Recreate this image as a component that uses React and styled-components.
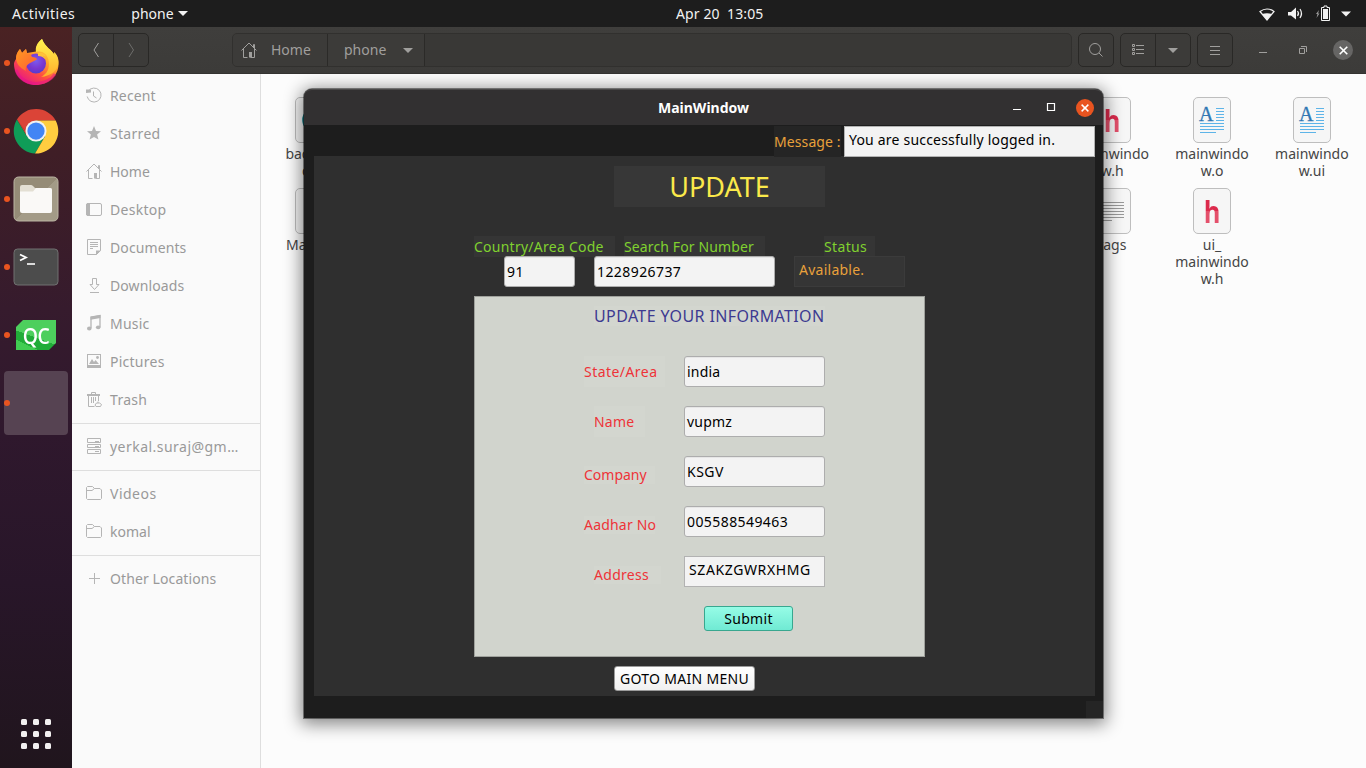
import React from "react";
import styled, { createGlobalStyle } from "styled-components";

const GlobalStyle = createGlobalStyle`
  * { box-sizing: border-box; }
  html, body { margin: 0; padding: 0; }
  body {
    width: 1366px; height: 768px; overflow: hidden; background: #fcfcfc;
    font-family: "Noto Sans", "Open Sans", sans-serif; font-size: 14px;
  }
  svg { display: block; flex: none; overflow: visible; }
  button { font: inherit; margin: 0; outline: none; }
`;

const Desktop = styled.div`
  position: relative;
  width: 1366px;
  height: 768px;
  overflow: hidden;
  display: flex;
  flex-direction: column;
`;

/* Each text run carries its own tracking. */
const Text = styled.span`
  white-space: pre;
  letter-spacing: ${(p) => p.$ls || 0}px;
`;

/* ---------- top bar ---------- */
const TopBar = styled.header`
  height: 27px;
  flex: none;
  display: grid;
  grid-template-columns: 1fr auto 1fr;
  align-items: center;
  background: #1d1d1d;
  color: #f2f2f2;
  line-height: 27px;
`;
const TopLeft = styled.div`
  display: flex;
  align-items: center;
  padding-left: 12px;
`;
const AppMenu = styled.div`
  display: flex;
  align-items: center;
  gap: 4px;
  margin-left: 56px;
`;
const Clock = styled.div`
  width: 88px;
  margin-left: 74px;
`;
const TopRight = styled.div`
  display: flex;
  justify-content: flex-end;
  align-items: center;
  padding-right: 15px;
`;

/* ---------- dock ---------- */
const Main = styled.div`
  flex: 1;
  display: flex;
  min-height: 0;
`;
const Dock = styled.nav`
  width: 72px;
  flex: none;
  display: flex;
  flex-direction: column;
  padding: 4px 4px 0;
  background: linear-gradient(180deg, #4a2223 0%, #3f1e26 17%, #361b2d 38%, #2f182d 55%, #281629 75%, #20151d 100%);
`;
const DockItem = styled.div`
  width: 64px;
  height: 64px;
  margin-bottom: 4px;
  display: flex;
  align-items: center;
  gap: 3px;
  border-radius: 4px;
  background: ${(p) => (p.$active ? "#564352" : "transparent")};
`;
const Dot = styled.i`
  width: 6px;
  height: 6px;
  border-radius: 50%;
  background: #e95420;
`;
const AppGrid = styled.div`
  margin: auto 0 19px 17px;
  display: grid;
  grid-template-columns: repeat(3, 6px);
  gap: 6px;
`;
const AppGridDot = styled.i`
  height: 6px;
  border-radius: 1.5px;
  background: #f2f0f0;
`;

/* ---------- file manager ---------- */
const Files = styled.div`
  flex: 1;
  display: flex;
  flex-direction: column;
  min-width: 0;
`;
const HeaderBar = styled.div`
  height: 47px;
  flex: none;
  display: flex;
  align-items: center;
  padding: 0 13px 0 6px;
  background: linear-gradient(#3f3e3c, #3c3b39);
  border-bottom: 1px solid #343331;
  color: #a09f9d;
  ${Text} { margin-top: -2px; }
`;
const ButtonGroup = styled.div`
  display: flex;
  height: 34px;
  margin-left: ${(p) => p.$ml || 0}px;
  border: 1px solid #292826;
  border-radius: 5px;
  background: #3c3b39;
`;
const HeaderButton = styled.div`
  width: ${(p) => p.$w || 34}px;
  display: flex;
  align-items: center;
  justify-content: center;
  & + & { border-left: 1px solid #292826; }
`;
const PathBar = styled.div`
  display: flex;
  width: 840px;
  height: 34px;
  margin: 0 6px 0 83px;
  border: 1px solid #31302e;
  border-radius: 5px;
  background: #393836;
  overflow: hidden;
`;
const PathItem = styled.div`
  width: ${(p) => p.$w}px;
  display: flex;
  align-items: center;
  gap: ${(p) => p.$gap}px;
  padding-left: ${(p) => p.$pl}px;
  border-right: 1px solid #2b2a28;
  background: #3c3b39;
`;
const WindowControls = styled.div`
  flex: 1;
  display: flex;
  align-items: center;
  justify-content: flex-end;
`;
const FileBody = styled.div`
  flex: 1;
  display: flex;
  min-height: 0;
`;
const Sidebar = styled.aside`
  width: 189px;
  flex: none;
  padding-top: 2px;
  background: #fafafa;
  border-right: 1px solid #dedede;
`;
const SideItem = styled.div`
  display: flex;
  align-items: center;
  height: 38px;
  gap: 8px;
  padding-left: 14px;
  color: #b5b5b5;
  ${Text} { color: #999; }
`;
const SideRule = styled.hr`
  height: 1px;
  margin: 5px 0 3px;
  border: 0;
  background: #dedede;
`;
const FileGrid = styled.div`
  display: grid;
  flex: 1;
  grid-template-columns: repeat(11, 99.8px);
  grid-auto-rows: 91px;
  padding: 23px 0 0 3px;
  overflow: hidden;
`;
const FileCell = styled.div`
  grid-column: ${(p) => p.$col};
  grid-row: ${(p) => p.$row};
  display: flex;
  flex-direction: column;
  align-items: center;
  color: #454545;
  line-height: 17px;
`;
const FileIcon = styled.div`
  width: 38px;
  height: 46px;
  flex: none;
  margin-bottom: 2px;
  display: flex;
  align-items: center;
  justify-content: center;
  border: 1px solid #bebebe;
  border-bottom-width: 1.5px;
  border-radius: 5px;
  background: #f6f6f6;
`;
const Glyph = styled.span`
  font: bold 31px/38px "Open Sans", sans-serif;
  transform: scaleX(0.82);
  background: linear-gradient(#dc2a4c 50%, #e4506b 50%);
  background-clip: text;
  color: transparent;
`;

/* ---------- application window ---------- */
const Win = styled.section`
  position: absolute;
  left: 304px;
  top: 89px;
  width: 799px;
  height: 629px;
  display: flex;
  flex-direction: column;
  background: #1d1d1d;
  border-radius: 8px 8px 0 0;
  box-shadow: 0 0 0 1px rgba(0, 0, 0, 0.42), 0 3px 17px 3px rgba(0, 0, 0, 0.48);
`;
const TitleBar = styled.div`
  height: 36px;
  flex: none;
  display: flex;
  align-items: center;
  padding-right: 9px;
  background: #323031;
  border-radius: 8px 8px 0 0;
  border-top: 1px solid #4b4a4a;
  color: #fff;
`;
const Title = styled.div`
  flex: 1;
  padding-left: 354px;
  font-weight: 700;
  line-height: 36px;
`;
const TitleControl = styled.div`
  margin-right: ${(p) => p.$mr}px;
`;
const CloseButton = styled.div`
  width: ${(p) => p.$size}px;
  height: ${(p) => p.$size}px;
  display: flex;
  align-items: center;
  justify-content: center;
  border-radius: 50%;
  background: ${(p) => p.$bg};
`;
const MessageRow = styled.div`
  position: relative;
  z-index: 1;
  display: flex;
  justify-content: flex-end;
  gap: 3px;
  height: 31px;
  padding-right: 8px;
  margin-top: 1px;
  margin-bottom: -1px;
`;
const Label = styled.label`
  width: ${(p) => p.$w}px;
  height: ${(p) => p.$h}px;
  line-height: ${(p) => p.$h}px;
  margin-left: ${(p) => p.$ml || 0}px;
  margin-top: ${(p) => p.$mt || 0}px;
  flex: none;
  color: ${(p) => p.$color};
  background: ${(p) => p.$bg};
`;
const TextBox = styled.div`
  width: ${(p) => p.$w}px;
  height: 31px;
  flex: none;
  margin-left: ${(p) => p.$ml || 0}px;
  padding-left: 4px;
  line-height: 26px;
  color: ${(p) => (p.$dark ? "#e9a13b" : "#000")};
  background: ${(p) => (p.$dark ? "#353535" : "#f3f3f3")};
  border: 1px solid ${(p) => (p.$dark ? "#3b3b3b" : "#b2b2b2")};
`;
const Field = styled.div`
  width: ${(p) => p.$w}px;
  height: 31px;
  flex: none;
  margin-left: ${(p) => p.$ml || 0}px;
  padding-left: 2px;
  line-height: 30px;
  color: #000;
  background: #f3f3f3;
  border: 1px solid #adadad;
  border-radius: 3px;
  box-shadow: inset 0 1px 0 #e6e6e6;
`;
const Content = styled.div`
  width: 781px;
  height: 540px;
  margin-left: 10px;
  padding-top: 10px;
  background: #2f2f2f;
`;
const Heading = styled.h1`
  width: 211px;
  height: 41px;
  margin: 0 0 29px 300px;
  font-size: 27px;
  font-weight: 400;
  line-height: 42px;
  text-align: center;
  color: #fbe94a;
  background: #373737;
`;
const Row = styled.div`
  display: flex;
  height: ${(p) => p.$h}px;
  padding-left: ${(p) => p.$pl}px;
`;
const Panel = styled.div`
  width: 451px;
  height: 361px;
  margin: 9px 0 9px 160px;
  padding-top: 9px;
  background: #d1d4cd;
  border: 1px solid #9fa19c;
`;
const PanelTitle = styled.h2`
  width: 231px;
  height: 20px;
  margin: 0 0 30px 119px;
  font-size: 16px;
  font-weight: 400;
  line-height: 20px;
  color: #3d3a91;
  background: #d3d6cf;
`;
const FormRow = styled.div`
  display: grid;
  grid-template-columns: 209px auto;
  height: 50px;
`;
const PushButton = styled.button`
  display: block;
  width: ${(p) => p.$w}px;
  height: 25px;
  margin-left: ${(p) => p.$ml}px;
  padding: 0;
  line-height: 23px;
  text-align: center;
  color: #000;
  border: 1px solid ${(p) => (p.$mint ? "#38a78f" : "#9b9b9b")};
  border-radius: 3px;
  background: ${(p) => (p.$mint ? "linear-gradient(#96fce6, #70ead3)" : "linear-gradient(#fff, #f0f0f0)")};
`;
const SizeGrip = styled.div`
  width: 17px;
  height: 17px;
  margin: auto 0 0 auto;
  background: #252525;
`;

/* ---------- icons ---------- */
const Svg = ({ s = 16, w, h, children, ...rest }) => (
  <svg width={w || s} height={h || s} viewBox={`0 0 ${w || s} ${h || s}`} fill="none" stroke="currentColor" strokeWidth="1" {...rest}>
    {children}
  </svg>
);
const Caret = ({ w = 10, h = 5 }) => (
  <svg width={w} height={h} viewBox="0 0 10 5" fill="currentColor"><path d="M0 0h10L5 5z" /></svg>
);
const Cross = ({ s = 9 }) => (
  <svg width={s} height={s} viewBox="0 0 9 9" stroke="#fff" strokeWidth="1.6"><path d="M.7.7l7.6 7.6M8.3.7L.7 8.3" /></svg>
);

const HomeIcon = () => (
  <Svg><path d="M.5 8.500L8 1l7.500 7.500M2.500 7v8.500h4M13.500 7v8.500h-4M12.500 5V2.500h1V6" /><path d="M8 10h3v5.500H8z" fill="currentColor" stroke="none" /></Svg>
);
const RecentIcon = () => (
  <Svg><path d="M2.200 4.200A7 7 0 1 1 1.200 9.500M7.500 4.500V9l3 2" /><path d="M0 2.500h5v3L0 6z" fill="currentColor" stroke="none" /></Svg>
);
const StarIcon = () => (
  <Svg><path fill="currentColor" stroke="none" d="M8 1l2 4.900 5 .4-3.900 3.300 1.300 5L8 11.900l-4.400 2.700 1.300-5L1 6.300l5-.4z" /></Svg>
);
const DesktopIcon = () => (
  <Svg><rect x=".5" y="2.500" width="15" height="12" rx="1.500" /><path d="M0 3.500L1.500 2H4v13H1.500L0 13.500z" fill="currentColor" stroke="none" /></Svg>
);
const DocumentsIcon = () => (
  <Svg><path d="M1.500.5h13v11l-4 4h-9zM4 3.500h8M4 5.500h8M4 7.500h8M4 9.500h3" /><path d="M10 16v-4.500h5z" fill="currentColor" stroke="none" /></Svg>
);
const DownloadsIcon = () => (
  <Svg><path d="M6.500 1.500h4v6H13l-4.500 5L4 7.500h2.500zM4 15.500h9" /></Svg>
);
const MusicIcon = () => (
  <Svg><path d="M5 13V2l9-1.500V12" strokeWidth="1.300" /><path d="M4.500 1.700L14.500 0v3l-10 1.700z" fill="currentColor" stroke="none" /><ellipse cx="3.300" cy="13.500" rx="2.300" ry="1.900" fill="currentColor" stroke="none" /><ellipse cx="12.200" cy="12.300" rx="2.300" ry="1.900" fill="currentColor" stroke="none" /></Svg>
);
const PicturesIcon = () => (
  <Svg><rect x="1.500" y="1.500" width="13" height="13" /><path d="M2 12h12v3H2zM3 11l3-5 2 3 1.500-2L13 11z" fill="currentColor" stroke="none" /><circle cx="11.500" cy="4.500" r="1.400" fill="currentColor" stroke="none" /></Svg>
);
const TrashIcon = () => (
  <Svg><path d="M5.500 3V1.500h4V3M2.500 5v10.500h6M12.500 5v5M5.500 6v6M7.500 6v6M9.500 6v4" /><path d="M1 3h13v2H1z" fill="currentColor" stroke="none" /><path d="M12 10.500v1.500M10 15.500h4.500l1-2-2-1.500h-3l-1.500 2z" /></Svg>
);
const ServerIcon = () => (
  <Svg><path d="M1.500.5h13v4h-13zM1.500 6.500h13v3h-13zM1.500 11.500h13v4h-13zM9 3.500h4M9 8.500h4M9 13.500h4" /></Svg>
);
const FolderIcon = () => (
  <Svg><path d="M.5 13.500V2.500l1-1h5l2 2h5.500l1.500 1.500v8.500l-1 1h-13zM.5 5.500h5.500l2.500-2" /></Svg>
);
const PlusIcon = () => (
  <Svg><path d="M3 8.500h11M8.500 3v11" /></Svg>
);

const Firefox = () => (
  <svg width="46" height="48" viewBox="0 0 46 48">
    <defs>
      <linearGradient id="fx1" x1=".85" y1=".1" x2=".25" y2="1">
        <stop offset="0" stopColor="#fff44f" /><stop offset=".35" stopColor="#ffa92a" /><stop offset=".65" stopColor="#ff4f40" /><stop offset="1" stopColor="#e5138a" />
      </linearGradient>
      <radialGradient id="fx2" cx=".5" cy=".35" r=".7"><stop offset="0" stopColor="#7a5cf0" /><stop offset=".6" stopColor="#7a35cf" /><stop offset="1" stopColor="#4a3fd0" /></radialGradient>
      <linearGradient id="fx3" x1="0" y1="0" x2="1" y2="1"><stop offset="0" stopColor="#ff9a20" /><stop offset="1" stopColor="#ff5c35" /></linearGradient>
      <linearGradient id="fx4" x1=".5" y1="0" x2=".5" y2="1"><stop offset="0" stopColor="#fff44f" /><stop offset="1" stopColor="#ffae2b" /></linearGradient>
    </defs>
    <path fill="url(#fx1)" d="M29 0c-4 3-6 7-6 12.500L14 14l-1-4-4 4-2-4c-3 3-4 7-4 10C1.500 22 1 24 1 25c0 12 10 21 22 21s22.500-9 22.500-21c0-5-1.500-9-4.500-12l.5 3C39 11 32 8 29 0z" />
    <path fill="url(#fx4)" d="M29 0c-5 4-7 8-6 13 7-2 13 3 13 12 0 7-4 11-8 13 10-1 17.500-7 17.500-15 0-4-1.500-7.500-4.500-10l.5 3C39 11 32 8 29 0z" />
    <circle cx="23" cy="24.500" r="10" fill="url(#fx2)" />
    <path fill="url(#fx3)" d="M3 20c0-4 1-7 4-10l2 4 4-4 1 4.500c3 0 4 .5 5 3.500 3 0 5 1 5 2.500l-7 3.500c-3 2-5 4-4 8C6 28 4 25 3 20z" />
    <path fill="#ffc23a" d="M25 14c4-1 7 1 8 3.500l-3-.5c1 1 2 2 2 3-2-2-4-3-7-3z" />
    <path fill="none" stroke="#e5138a" strokeWidth="3" opacity=".55" d="M3 31c3 9 11 13.500 20 13.500S39 40 42 35" />
  </svg>
);
const Chrome = () => (
  <svg width="46" height="46" viewBox="0 0 48 48">
    <path fill="#db4437" d="M4.100 12A23.500 23.500 0 0 1 44.500 13H24L14.500 29.500z" />
    <path fill="#0f9d58" d="M4.100 12A23.500 23.500 0 0 0 23 47.500L33.500 29.500l-19 0z" />
    <path fill="#ffcd40" d="M44.500 13A23.500 23.500 0 0 1 23 47.500L33.500 29.500 24 13z" />
    <path fill="#a8362c" opacity=".5" d="M4.100 12l4.500 7.500L14 26l-.500-2z" />
    <circle cx="24" cy="24" r="11" fill="#f1f1f1" /><circle cx="24" cy="24" r="9" fill="#4285f4" />
  </svg>
);
const FilesApp = () => (
  <svg width="46" height="46" viewBox="0 0 46 46">
    <defs><linearGradient id="fl" x1="0" y1="0" x2="1" y2="1"><stop offset=".5" stopColor="#958c77" /><stop offset=".5" stopColor="#a39b87" /></linearGradient></defs>
    <rect x="1" y="1" width="44" height="44" rx="4.500" fill="url(#fl)" stroke="#bcb5a4" />
    <path d="M7 20V11q0-2 2-2h9q1 0 2 1l2 2h15q2 0 2 2v8z" fill="#e3dfd3" />
    <path d="M7 15.500h13l3-3.500h14q2 0 2 2v21q0 2-2 2H9q-2 0-2-2z" fill="#faf9f7" />
  </svg>
);
const Terminal = () => (
  <svg width="46" height="46" viewBox="0 0 46 46">
    <rect x="1" y="5" width="44" height="36" rx="3.500" fill="#4c4c4c" stroke="#717171" />
    <path d="M7 10.500l6 3-6 3" fill="none" stroke="#fff" strokeWidth="1.800" /><path d="M14 20h8" stroke="#fff" strokeWidth="1.600" />
  </svg>
);
const QtIcon = styled.div`
  width: 40px;
  height: 30px;
  margin-left: 3px;
  display: flex;
  align-items: center;
  justify-content: center;
  color: #fff;
  font: 600 22px/30px "Open Sans", sans-serif;
  letter-spacing: -0.5px;
  clip-path: polygon(7px 0, 100% 0, 100% 23px, 33px 100%, 0 100%, 0 7px);
  background: linear-gradient(25deg, #41cd52 0 21%, transparent 21%), linear-gradient(200deg, #4dcf5d 56%, #21ac38 56%);
`;
const Squeeze = styled.span`
  transform: scaleX(0.88);
`;

const WriterIcon = () => (
  <svg width="26" height="28" viewBox="0 0 26 28" stroke="#5db4e8">
    <text x="0" y="15" fontFamily="Liberation Serif" fontSize="20" fill="#3077b3" stroke="#3077b3" strokeWidth=".3">A</text>
    <path d="M17 2.500h8M17 5.500h8M17 8.500h8M17 11.500h8M17 14.500h8M1 17.500h24M1 20.500h24M1 23.500h24M1 26.500h16" />
  </svg>
);
const TextIcon = () => (
  <svg width="26" height="24" viewBox="0 0 26 24" stroke="#999"><path d="M1 3.500h24M1 6.500h24M1 9.500h24M1 12.500h24M1 15.500h24M1 18.500h24M1 21.500h12" /></svg>
);
const SourceIcon = () => (
  <svg width="24" height="24" viewBox="0 0 24 24" fill="none" stroke="#1f8a94" strokeWidth="4"><path d="M19 6A9.500 9.500 0 1 0 19 18" /></svg>
);

const places = [
  ["Recent", RecentIcon, 0.15], ["Starred", StarIcon, 0.3], ["Home", HomeIcon, 0], ["Desktop", DesktopIcon, 0.3],
  ["Documents", DocumentsIcon, 0.1], ["Downloads", DownloadsIcon, 0.1], ["Music", MusicIcon, 0.2],
  ["Pictures", PicturesIcon, 0.25], ["Trash", TrashIcon, 0.3],
];

const files = [
  { col: 1, row: 1, kind: "source", lines: ["backpro.", "cpp"] },
  { col: 1, row: 2, lines: ["Makefile"] },
  { col: 9, row: 1, kind: "h", lines: ["mainwindo", "w.h"] },
  { col: 10, row: 1, kind: "doc", lines: ["mainwindo", "w.o"] },
  { col: 11, row: 1, kind: "doc", lines: ["mainwindo", "w.ui"] },
  { col: 9, row: 2, kind: "text", lines: ["tags"] },
  { col: 10, row: 2, kind: "h", lines: ["ui_", "mainwindo", "w.h"] },
];

const fields = [
  { label: "State/Area", ls: 0.45, value: "india", vls: 0.2, w: 81, h: 31, ml: 109, mt: 0 },
  { label: "Name", ls: 0.2, value: "vupmz", vls: 0.2, w: 51, h: 31, ml: 119, mt: 0 },
  { label: "Company", ls: 0, value: "KSGV", vls: 0.5, w: 71, h: 18, ml: 109, mt: 10 },
  { label: "Aadhar No", ls: 0.2, value: "005588549463", vls: 0.42, w: 71, h: 18, ml: 109, mt: 10 },
];

function FileView() {
  return (
    <FileGrid>
      {files.map((f) => (
        <FileCell key={f.col + "-" + f.row} $col={f.col} $row={f.row}>
          <FileIcon>
            {f.kind === "h" && <Glyph>h</Glyph>}
            {f.kind === "doc" && <WriterIcon />}
            {f.kind === "text" && <TextIcon />}
            {f.kind === "source" && <SourceIcon />}
          </FileIcon>
          {f.lines.map((l) => <Text key={l}>{l}</Text>)}
        </FileCell>
      ))}
    </FileGrid>
  );
}

function MainWindow() {
  return (
    <Win>
      <TitleBar>
        <Title><Text>MainWindow</Text></Title>
        <TitleControl $mr={24}><Svg w={9} h={11}><path d="M0 7.500h8" /></Svg></TitleControl>
        <TitleControl $mr={20}><Svg w={10} h={9} strokeWidth="1.2"><path d="M1.500.5h7v7h-7z" /></Svg></TitleControl>
        <CloseButton $size={18} $bg="#e95420"><Cross s={8} /></CloseButton>
      </TitleBar>
      <MessageRow>
        <Label $w={67} $h={31} $color="#e9a13b" $bg="#252525"><Text $ls={0.1}>Message :</Text></Label>
        <TextBox $w={251}><Text $ls={0.2}>You are successfully logged in.</Text></TextBox>
      </MessageRow>
      <Content>
        <Heading><Text>UPDATE</Text></Heading>
        <Row $h={20} $pl={160}>
          <Label $w={141} $h={21} $color="#80d12f" $bg="#353535"><Text $ls={0.25}>Country/Area Code</Text></Label>
          <Label $w={141} $h={21} $ml={9} $color="#80d12f" $bg="#353535"><Text $ls={0.12}>Search For Number</Text></Label>
          <Label $w={51} $h={21} $ml={59} $color="#80d12f" $bg="#353535"><Text $ls={0.35}>Status</Text></Label>
        </Row>
        <Row $h={31} $pl={190}>
          <Field $w={71}><Text $ls={0.4}>91</Text></Field>
          <Field $w={181} $ml={19}><Text $ls={0.42}>1228926737</Text></Field>
          <TextBox $dark $w={111} $ml={19}><Text $ls={0.25}>Available.</Text></TextBox>
        </Row>
        <Panel>
          <PanelTitle><Text $ls={0.38}>UPDATE YOUR INFORMATION</Text></PanelTitle>
          {fields.map((f) => (
            <FormRow key={f.label}>
              <Label $w={f.w} $h={f.h} $ml={f.ml} $mt={f.mt} $color="#ee3338" $bg="#d3d6cf"><Text $ls={f.ls}>{f.label}</Text></Label>
              <Field $w={141}><Text $ls={f.vls}>{f.value}</Text></Field>
            </FormRow>
          ))}
          <FormRow>
            <Label $w={67} $h={18} $ml={119} $mt={10} $color="#ee3338" $bg="#d3d6cf"><Text $ls={0.3}>Address</Text></Label>
            <TextBox $w={141}><Text $ls={0.6}>SZAKZGWRXHMG</Text></TextBox>
          </FormRow>
          <PushButton $mint $w={89} $ml={229}><Text $ls={0.3}>Submit</Text></PushButton>
        </Panel>
        <PushButton $w={141} $ml={300}><Text $ls={0.3}>GOTO MAIN MENU</Text></PushButton>
      </Content>
      <SizeGrip />
    </Win>
  );
}

export default function App() {
  return (
    <Desktop>
      <GlobalStyle />
      <TopBar>
        <TopLeft>
          <Text $ls={0.5}>Activities</Text>
          <AppMenu><Text>phone</Text><Caret /></AppMenu>
        </TopLeft>
        <Clock><Text $ls={0.1}>Apr 20  13:05</Text></Clock>
        <TopRight>
          <svg width="107" height="18" viewBox="0 0 107 18" fill="#f2f2f2">
            <path d="M16 6.500q7-5 14 0l-7 8.500z" fill="none" stroke="#f2f2f2" strokeWidth="1.200" />
            <path d="M18 9q5-1.500 10 0L23 15z" />
            <path d="M44 7h3l5-4.500v12L47 10.500h-3z" />
            <path d="M53.500 6q2 2.500 0 5M56 4q3 4.500 0 9" fill="none" stroke="#f2f2f2" strokeWidth="1.200" />
            <path d="M75 5l-3 4h1.500L72.500 13l3-4.500h-1.400z" opacity=".6" />
            <path d="M77.500 2.500h2.500v-1.500h3v1.500h2.500v13h-8z" fill="none" stroke="#f2f2f2" />
            <path d="M79 4h5v10h-5z" />
            <path d="M97 6.500h10l-5 5z" />
          </svg>
        </TopRight>
      </TopBar>
      <Main>
        <Dock>
          <DockItem><Dot /><Firefox /></DockItem>
          <DockItem><Dot /><Chrome /></DockItem>
          <DockItem><Dot /><FilesApp /></DockItem>
          <DockItem><Dot /><Terminal /></DockItem>
          <DockItem><Dot /><QtIcon><Squeeze>QC</Squeeze></QtIcon></DockItem>
          <DockItem $active><Dot /></DockItem>
          <AppGrid>{Array.from({ length: 9 }, (_, i) => <AppGridDot key={i} />)}</AppGrid>
        </Dock>
        <Files>
          <HeaderBar>
            <ButtonGroup>
              <HeaderButton><Svg w={8} h={16}><path d="M6.500 1L2 8l4.500 7" /></Svg></HeaderButton>
              <HeaderButton $w={35}><Svg w={8} h={16} opacity=".5"><path d="M2 1l4.500 7L2 15" /></Svg></HeaderButton>
            </ButtonGroup>
            <PathBar>
              <PathItem $w={95} $gap={14} $pl={8}><HomeIcon /><Text>Home</Text></PathItem>
              <PathItem $w={97} $gap={17} $pl={16}><Text>phone</Text><Caret /></PathItem>
            </PathBar>
            <ButtonGroup><HeaderButton><Svg><circle cx="7" cy="7" r="5.500" /><path d="M11 11l3.500 3.500" /></Svg></HeaderButton></ButtonGroup>
            <ButtonGroup $ml={6}>
              <HeaderButton>
                <Svg w={14} h={12}><path d="M1.500.5h2v2h-2zM1.500 4.500h2v2h-2zM1.500 8.500h2v2h-2zM5 1.500h8M5 5.500h8M5 9.500h8" /></Svg>
              </HeaderButton>
              <HeaderButton $w={35}><Caret /></HeaderButton>
            </ButtonGroup>
            <ButtonGroup $ml={6}><HeaderButton><Svg w={10} h={11}><path d="M0 1.500h10M0 5.500h10M0 9.500h10" /></Svg></HeaderButton></ButtonGroup>
            <WindowControls>
              <Svg w={88} h={20}><path d="M14 12.500h8M54.500 8.500h5v5h-5zM56 6.500h5.500v5.500" /></Svg>
              <CloseButton $size={20} $bg="#666564"><Cross /></CloseButton>
            </WindowControls>
          </HeaderBar>
          <FileBody>
            <Sidebar>
              {places.map(([name, Icon, ls]) => (
                <SideItem key={name}><Icon /><Text $ls={ls}>{name}</Text></SideItem>
              ))}
              <SideRule />
              <SideItem><ServerIcon /><Text $ls={0.47}>yerkal.suraj@gm…</Text></SideItem>
              <SideRule />
              <SideItem><FolderIcon /><Text $ls={0.5}>Videos</Text></SideItem>
              <SideItem><FolderIcon /><Text>komal</Text></SideItem>
              <SideRule />
              <SideItem><PlusIcon /><Text $ls={0.1}>Other Locations</Text></SideItem>
            </Sidebar>
            <FileView />
          </FileBody>
        </Files>
      </Main>
      <MainWindow />
    </Desktop>
  );
}
